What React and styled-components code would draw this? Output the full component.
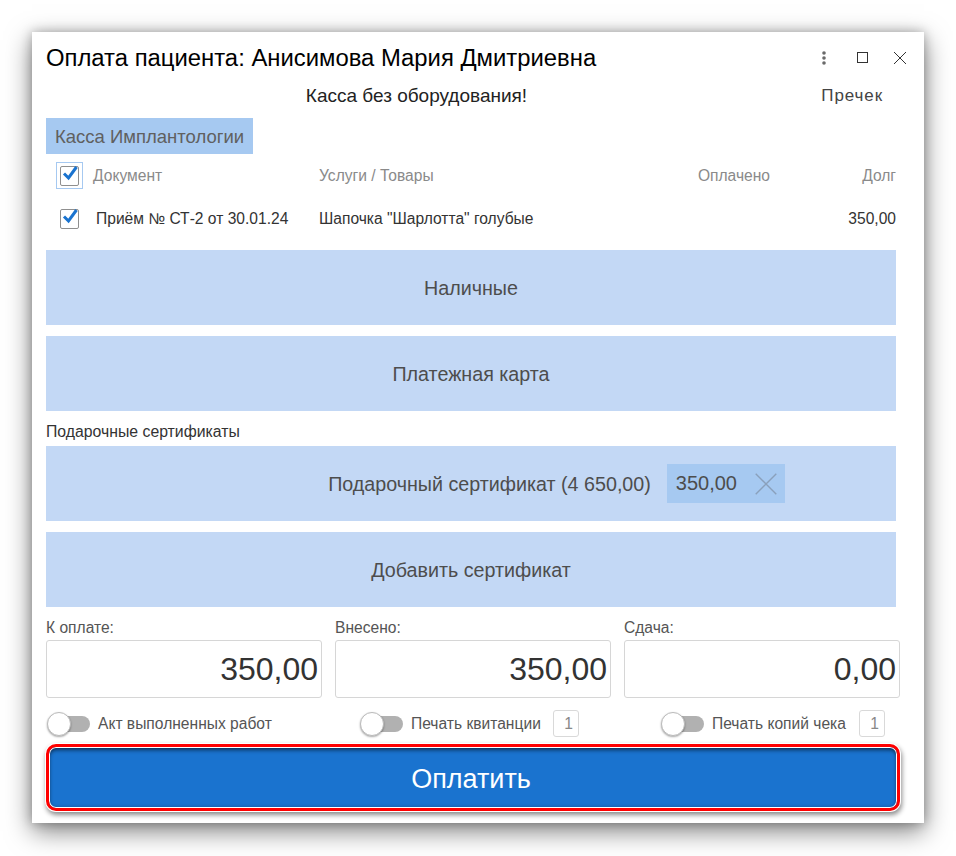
import React from "react";
import styled, { createGlobalStyle } from "styled-components";

const Global = createGlobalStyle`
  html, body { margin: 0; padding: 0; background: #fff; }
  body { font-family: "Liberation Sans", Arial, sans-serif; }
  * { box-sizing: border-box; }
`;
const Page = styled.div`
  width: 956px; height: 856px; padding: 32px; overflow: hidden;
`;
const Dialog = styled.div`
  width: 892px; height: 791px; background: #fff; padding: 0 28px 0 14px;
  box-shadow: 0 8px 24px rgba(0,0,0,.5), 0 0 10px rgba(0,0,0,.25);
  display: flex; flex-direction: column;
`;
const TitleBar = styled.div`
  height: 50px; display: flex; align-items: center; justify-content: space-between;
`;
const Title = styled.div`
  font-size: 23.85px; color: #000; white-space: nowrap; padding-top: 2px;
`;
const WinButtons = styled.div`
  display: flex; align-items: center; gap: 24px; margin-right: -11px; padding-top: 1px;
`;
const DotsWrap = styled.span`
  display: flex; margin-right: 6px;
`;
const KassaRow = styled.div`
  height: 28px; display: grid; grid-template-columns: 741px 1fr; align-items: center;
`;
const KassaText = styled.div`
  text-align: center; font-size: 19px; color: #222;
`;
const Receipt = styled.div`
  justify-self: end; padding-right: 13px; font-size: 17px; color: #444; white-space: nowrap; letter-spacing: .9px;
`;
const TabRow = styled.div`
  margin-top: 8px; display: flex;
`;
const Tab = styled.div`
  height: 36px; width: 207px; background: #a6c9f1; color: #606060; font-size: 18.5px;
  display: flex; align-items: center; justify-content: center; padding-top: 1px;
`;
const TableRow = styled.div`
  display: grid; grid-template-columns: 273px 1fr 130px 126px;
  align-items: center; height: ${p => p.$h}px; margin-bottom: ${p => p.$mb || 0}px; font-size: 15.6px; flex: none;
  color: ${p => p.$head ? "#8a8a8a" : "#333"};
`;
const DocCell = styled.div`
  display: flex; align-items: center; padding-left: ${p => p.$pad}px; gap: ${p => p.$gap}px; white-space: nowrap;
`;
const Focus = styled.span`
  display: flex; width: 27px; height: 27px; align-items: center; justify-content: center;
  border: 1px solid #a6c9f1;
`;
const Right = styled.div` text-align: right; `;
const Box = styled.span`
  position: relative; display: block; width: 19px; height: 20px; border: 1px solid #8f8f8f; border-radius: 2px; background: #fff;
`;
const Tick = styled.svg`
  position: absolute; left: 0; top: -4px; width: 18px; height: 20px;
`;
const Big = styled.div`
  height: 75px; margin-bottom: 11px; background: #c3d8f5; color: #4d4d4d; font-size: 19.7px;
  display: flex; align-items: center; justify-content: center; gap: 16px; flex: none;
  padding-top: 2px; padding-left: ${p => p.$pl || 0}px;
`;
const Caption = styled.div`
  height: 24px; margin-top: -3px; padding-top: 4px; margin-bottom: 3px; font-size: 15.8px; color: #333; line-height: 18px; flex: none;
`;
const Chip = styled.div`
  height: 39px; width: 118px; margin-top: -2px; background: #a6c9f1; display: flex; align-items: center; padding: 0 7px 0 9px; justify-content: space-between;
  font-size: 20px; flex: none;
`;
const Totals = styled.div`
  display: grid; grid-template-columns: repeat(3, 276px); gap: 13px; width: 854px; margin-top: -1px; flex: none;
`;
const Field = styled.div` display: flex; flex-direction: column; `;
const FieldLabel = styled.div` height: 23px; font-size: 15.6px; color: #555; line-height: 20px; padding-top: 1px; `;
const FieldBox = styled.div`
  height: 58px; border: 1px solid #d6d6d6; border-radius: 3px; display: flex; align-items: center; justify-content: flex-end;
  font-size: 32px; color: #333; padding-right: 3px;
`;
const Options = styled.div`
  display: grid; grid-template-columns: 313px 301px 1fr; margin-top: 12px; height: 26px; align-items: center; flex: none;
`;
const Option = styled.div`
  display: flex; align-items: center; font-size: 15.6px; color: #555; white-space: nowrap;
`;
const Switch = styled.span`
  position: relative; display: block; width: 42px; height: 16px; margin-left: ${p => p.$ml}px; background: #b1b1b1; border-radius: 8px; margin-right: 8px; flex: none;
`;
const Knob = styled.span`
  position: absolute; left: -1px; top: -4px; width: 24px; height: 24px; border-radius: 50%; background: #fff;
  border: 1px solid #bbb; box-shadow: 0 1px 2px rgba(0,0,0,.35);
`;
const Count = styled.span`
  display: flex; width: 26px; height: 27px; margin-left: ${p => p.$ml}px; border: 1px solid #d9d9d9; border-radius: 3px;
  align-items: center; justify-content: flex-end; padding-right: 5px; color: #888;
`;
const Pay = styled.button`
  margin-top: 8px; width: 854px; height: 67px; flex: none; padding: 4px 4px 0 0; background: #1a73cf; color: #fff;
  font: 27px "Liberation Sans", Arial, sans-serif;
  border: 3px solid #f00; border-radius: 10px;
  box-shadow: inset 0 0 0 1px #fff, inset 0 4px 4px -1px rgba(0,0,0,.55), inset 0 0 4px rgba(0,0,0,.4),
    0 0 0 1px #fff, 1px 3px 5px 1px rgba(0,0,0,.45);
`;

const Check = () => (
  <Box>
    <Tick viewBox="0 0 18 20"><path d="M3 10.5 L7.5 15 L15.5 4" fill="none" stroke="#1a73cf" strokeWidth="3" /></Tick>
  </Box>
);
const Toggle = ({ ml = 2 }) => <Switch $ml={ml}><Knob /></Switch>;
const Dots = () => (
  <DotsWrap>
    <svg width="6" height="14" viewBox="0 0 6 14"><g fill="#6a6a6a"><circle cx="3" cy="2" r="1.8"/><circle cx="3" cy="7" r="1.8"/><circle cx="3" cy="12" r="1.8"/></g></svg>
  </DotsWrap>
);
const Square = () => (
  <svg width="12" height="12" viewBox="0 0 12 12"><rect x=".5" y=".5" width="10" height="10" fill="none" stroke="#333"/></svg>
);
const Close = ({ size = 14, color = "#333" }) => (
  <svg width={size} height={size} viewBox="0 0 14 14"><path d="M1 1 L13 13 M13 1 L1 13" stroke={color} strokeWidth={size > 14 ? .8 : 1} fill="none"/></svg>
);

export default function App() {
  return (
    <Page>
      <Global />
      <Dialog>
        <TitleBar>
          <Title>Оплата пациента: Анисимова Мария Дмитриевна</Title>
          <WinButtons><Dots /><Square /><Close /></WinButtons>
        </TitleBar>
        <KassaRow>
          <KassaText>Касса без оборудования!</KassaText>
          <Receipt>Пречек</Receipt>
        </KassaRow>
        <TabRow><Tab>Касса Имплантологии</Tab></TabRow>
        <TableRow $head $h={43}>
          <DocCell $pad={10} $gap={10}><Focus><Check /></Focus>Документ</DocCell>
          <div>Услуги / Товары</div>
          <Right>Оплачено</Right>
          <Right>Долг</Right>
        </TableRow>
        <TableRow $h={43} $mb={10}>
          <DocCell $pad={14} $gap={17}><Check />Приём № СТ-2 от 30.01.24</DocCell>
          <div>Шапочка "Шарлотта" голубые</div>
          <Right />
          <Right>350,00</Right>
        </TableRow>
        <Big>Наличные</Big>
        <Big>Платежная карта</Big>
        <Caption>Подарочные сертификаты</Caption>
        <Big $pl={171}>
          Подарочный сертификат (4 650,00)
          <Chip>350,00<Close size={24} color="#8aa0bb" /></Chip>
        </Big>
        <Big>Добавить сертификат</Big>
        <Totals>
          <Field><FieldLabel>К оплате:</FieldLabel><FieldBox>350,00</FieldBox></Field>
          <Field><FieldLabel>Внесено:</FieldLabel><FieldBox>350,00</FieldBox></Field>
          <Field><FieldLabel>Сдача:</FieldLabel><FieldBox>0,00</FieldBox></Field>
        </Totals>
        <Options>
          <Option><Toggle />Акт выполненных работ</Option>
          <Option><Toggle ml={2} />Печать квитанции<Count $ml={12}>1</Count></Option>
          <Option><Toggle ml={2} />Печать копий чека<Count $ml={13}>1</Count></Option>
        </Options>
        <Pay>Оплатить</Pay>
      </Dialog>
    </Page>
  );
}
